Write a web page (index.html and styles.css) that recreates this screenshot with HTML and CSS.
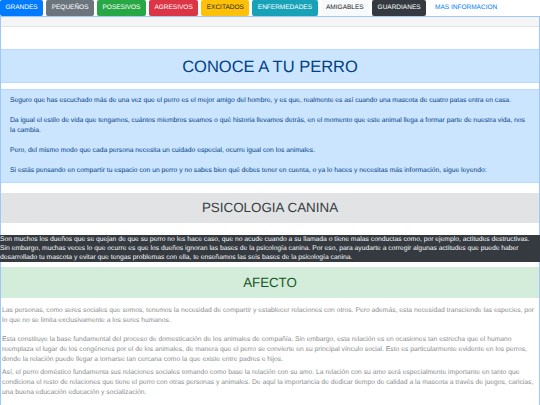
FILE: index.html
```html
<!DOCTYPE html>
<html lang="es">
<head>
<meta charset="utf-8">
<title>Conoce a tu perro</title>
<link rel="stylesheet" href="styles.css">
</head>
<body>
<nav class="nav">
  <a class="btn btn-primary">GRANDES</a>
  <a class="btn btn-secondary">PEQUEÑOS</a>
  <a class="btn btn-success">POSESIVOS</a>
  <a class="btn btn-danger">AGRESIVOS</a>
  <a class="btn btn-warning">EXCITADOS</a>
  <a class="btn btn-info">ENFERMEDADES</a>
  <a class="btn btn-light">AMIGABLES</a>
  <a class="btn btn-dark">GUARDIANES</a>
  <a class="btn btn-link">MAS INFORMACION</a>
</nav>
<div class="container">
  <div class="topbar"></div>
  <h1 class="title title-blue">CONOCE A TU PERRO</h1>
  <div class="intro">
    <p>Seguro que has escuchado más de una vez que el perro es el mejor amigo del hombre, y es que, realmente es así cuando una mascota de cuatro patas entra en casa.</p>
    <p>Da igual el estilo de vida que tengamos, cuántos miembros seamos o qué historia llevamos detrás, en el momento que este animal llega a formar parte de nuestra vida, nos la cambia.</p>
    <p>Pero, del mismo modo que cada persona necesita un cuidado especial, ocurre igual con los animales.</p>
    <p>Si estás pensando en compartir tu espacio con un perro y no sabes bien qué debes tener en cuenta, o ya lo haces y necesitas más información, sigue leyendo:</p>
  </div>
  <h2 class="title title-gray">PSICOLOGIA CANINA</h2>
  <p class="dark">Son muchos los dueños que se quejan de que su perro no les hace caso, que no acude cuando a su llamada o tiene malas conductas como, por ejemplo, actitudes destructivas. Sin embargo, muchas veces lo que ocurre es que los dueños ignoran las bases de la psicología canina. Por eso, para ayudarte a corregir algunas actitudes que puede haber desarrollado tu mascota y evitar que tengas problemas con ella, te enseñamos las seis bases de la psicología canina.</p>
  <h2 class="title title-green">AFECTO</h2>
  <div class="muted">
    <p class="m1">Las personas, como seres sociales que somos, tenemos la necesidad de compartir y establecer relaciones con otros. Pero además, esta necesidad transciende las especies, por lo que no se limita exclusivamente a los seres humanos.</p>
    <p class="m2">Esta constituye la base fundamental del proceso de domesticación de los animales de compañía. Sin embargo, esta relación es en ocasiones tan estrecha que el humano reemplaza el lugar de los congéneres por el de los animales, de manera que el perro se convierte en su principal vínculo social. Esto es particularmente evidente en los perros, donde la relación puede llegar a tornarse tan cercana como la que existe entre padres e hijos.</p>
    <p class="m3">Así, el perro doméstico fundamenta sus relaciones sociales tomando como base la relación con su amo. La relación con su amo será especialmente importante en tanto que condiciona el resto de relaciones que tiene el perro con otras personas y animales. De aquí la importancia de dedicar tiempo de calidad a la mascota a través de juegos, caricias, una buena educación educación y socialización.</p>
  </div>
</div>
</body>
</html>
```
FILE: styles.css
```css
* { box-sizing: border-box; }
html, body { margin: 0; padding: 0; background: #fff; }
body {
  font-family: "Liberation Sans", Arial, sans-serif;
  width: 540px;
  overflow: hidden;
  text-rendering: geometricPrecision;
}
.nav {
  display: flex;
  gap: 3px;
  height: 16px;
}
.btn {
  display: block;
  height: 16px;
  line-height: 16px;
  padding: 0 5.5px;
  font-size: 6.5px;
  border-radius: 2px;
  color: #fff;
  white-space: nowrap;
}
.btn-primary { background: #007bff; }
.btn-secondary { background: #6c757d; }
.btn-success { background: #28a745; }
.btn-danger { background: #dc3545; }
.btn-warning { background: #ffc107; color: #212529; }
.btn-info { background: #17a2b8; }
.btn-light { background: #f8f9fa; color: #212529; }
.btn-dark { background: #343a40; }
.btn-link { color: #007bff; background: transparent; padding-left: 6px; }

.container {
  border: 1px solid #9ec8f5;
  border-bottom: none;
  width: 540px;
  min-height: 389px;
}
.topbar {
  height: 10px;
  background: #f5f5f5;
  border-bottom: 1px solid #e3e3e3;
}
.title {
  margin: 0;
  font-weight: normal;
  text-align: center;
}
.title-blue {
  margin-top: 22px;
  height: 34px;
  line-height: 34px;
  font-size: 16.5px;
  background: #cce5ff;
  color: #004085;
  border-top: 1px solid #b8daff;
  border-bottom: 1px solid #b8daff;
}
.intro {
  margin-top: 6px;
  background: #cce5ff;
  color: #004085;
  padding: 6px 9px 3px;
  font-size: 6.75px;
  line-height: 10px;
  border-top: 1px solid #b8daff;
  border-bottom: 1px solid #b8daff;
}
.intro p { margin: 0 0 10px; }
.intro p:last-child { margin-bottom: 3px; }
.title-gray {
  margin-top: 10px;
  height: 30px;
  line-height: 30px;
  font-size: 13.4px;
  background: #e2e3e5;
  color: #383d41;
}
.dark {
  margin: 12px -1px 0;
  background: #343a40;
  color: #f8f9fa;
  font-size: 6.75px;
  line-height: 9px;
}
.title-green {
  margin-top: 5px;
  height: 31px;
  line-height: 31px;
  font-size: 13.3px;
  background: #d4edda;
  color: #155724;
}
.muted {
  margin-top: 8px;
  color: #8a8d90;
  font-size: 6.75px;
  line-height: 10px;
  padding-left: 1px;
}
.muted p { margin: 0; }
.muted .m1 { margin-bottom: 9px; }
.muted .m2 { margin-bottom: 3px; }
```
